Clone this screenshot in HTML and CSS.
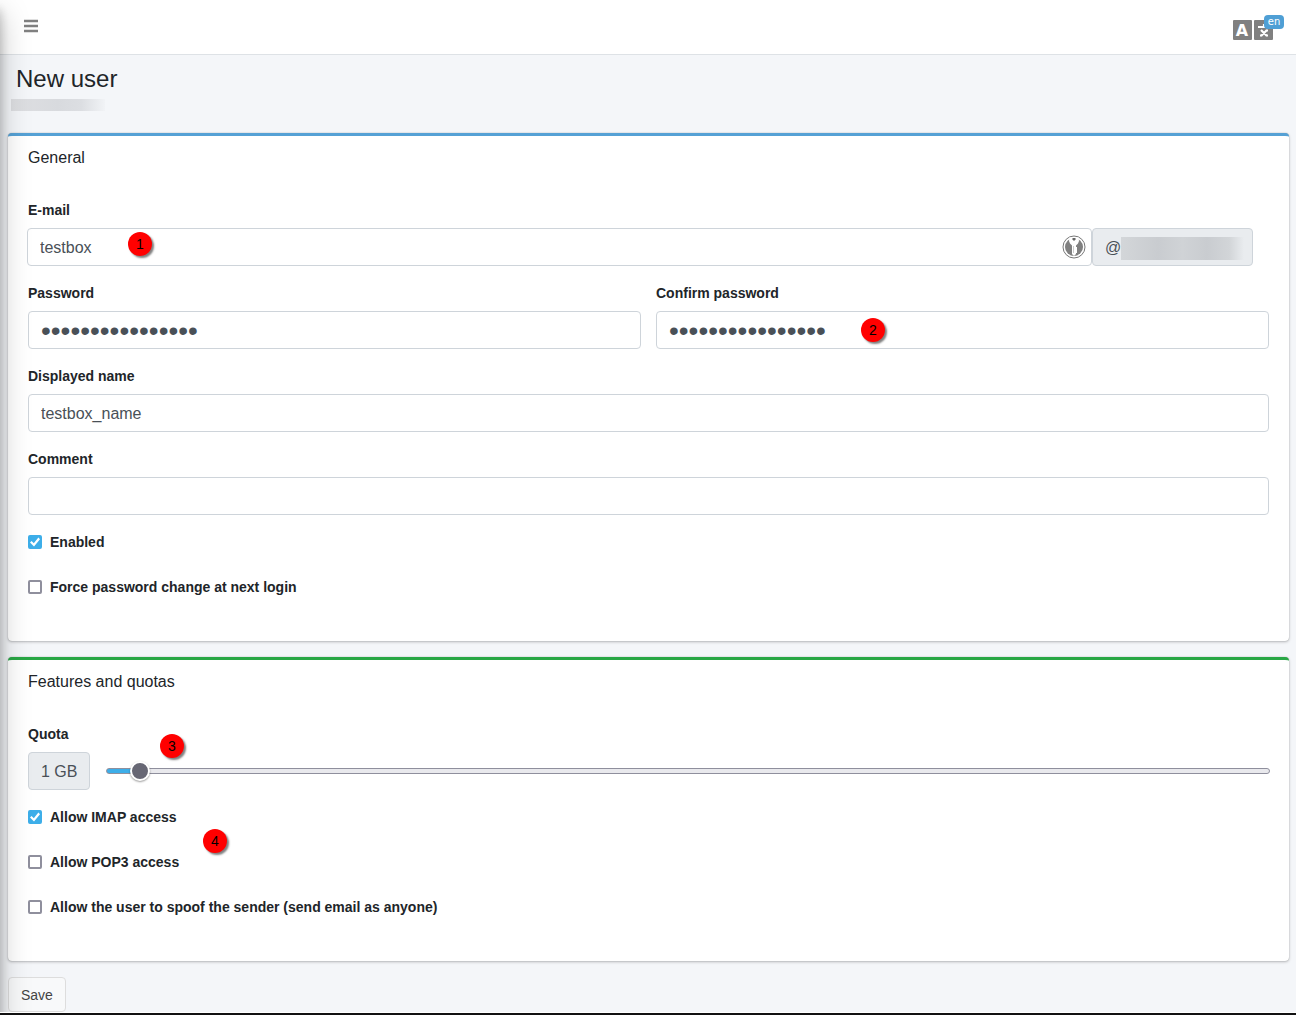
FILE: index.html
```html
<!DOCTYPE html>
<html lang="en">
<head>
<meta charset="utf-8">
<meta name="viewport" content="width=device-width, initial-scale=1">
<title>New user</title>
<link rel="stylesheet" href="styles.css">
</head>
<body>
<nav class="navbar">
  <button class="nav-button" type="button" aria-label="Toggle menu">
    <svg width="14" height="14" viewBox="0 0 14 14" aria-hidden="true"><path d="M0 .7h14v2.500H0zM0 5.700h14v2.500H0zM0 10.700h14v2.500H0z" fill="#808080"/></svg>
  </button>
  <button class="nav-button language" type="button" aria-label="Language">
    <svg width="40" height="20" viewBox="0 0 40 20" aria-hidden="true">
      <rect width="19" height="20" rx="1" fill="#808080"/>
      <rect x="21" width="19" height="20" rx="1" fill="#808080"/>
      <text class="language-letter" x="9" y="16" text-anchor="middle">A</text>
      <path d="M25 7H36M31 4V7M28 10L34 16M34 10L28 16M27 15.500H29.500M32.500 15.500H35M33 10.500H35" fill="none" stroke="#fff" stroke-width="2.200"/>
    </svg>
    <span class="badge">en</span>
  </button>
</nav>
<main>
  <header class="page-header">
    <h1>New user</h1>
    <div class="domain-mask"></div>
  </header>
  <form>
    <section class="card card-info">
      <h2>General</h2>
      <div class="card-body">
        <div class="field">
          <label for="email">E-mail</label>
          <div class="input-group email-group">
            <div class="email-box">
              <input class="control" id="email" type="text" value="testbox">
              <svg class="key" width="24" height="24" viewBox="0 0 24 24" aria-hidden="true">
                <circle cx="12" cy="12" r="11" fill="#fff" stroke="#777" stroke-width="1"/>
                <circle cx="12" cy="12" r="9" fill="#808080"/>
                <path d="M7.500 2.500H16.500L17 6L16 8.500L14 10.500V19L12 21L10 19V10.500L8 8.500L7 6Z" fill="#fff"/>
                <path d="M10.500 3H13.500V4.500L12 6L10.500 4.500Z" fill="#666"/>
                <path d="M11.500 11V18" fill="none" stroke="#ccc" stroke-width="1"/>
                <path d="M14 12L15 13L14 14L15 15L14 16L15 17L14 18" fill="#fff" stroke="#fff" stroke-width="1"/>
              </svg>
              <span class="marker marker-email">1</span>
            </div>
            <span class="addon domain">@<span class="addon-mask"></span></span>
          </div>
        </div>
        <div class="columns">
          <div class="field">
            <label for="password">Password</label>
            <input class="control" id="password" type="password" value="abcdefghijklmnop">
          </div>
          <div class="field">
            <label for="confirm">Confirm password</label>
            <input class="control" id="confirm" type="password" value="abcdefghijklmnop">
            <span class="marker marker-confirm">2</span>
          </div>
        </div>
        <div class="field">
          <label for="name">Displayed name</label>
          <input class="control" id="name" type="text" value="testbox_name">
        </div>
        <div class="field">
          <label for="comment">Comment</label>
          <input class="control" id="comment" type="text">
        </div>
        <div class="check"><input type="checkbox" id="enabled" checked><label for="enabled">Enabled</label></div>
        <div class="check"><input type="checkbox" id="force"><label for="force">Force password change at next login</label></div>
      </div>
    </section>
    <section class="card card-success">
      <h2>Features and quotas</h2>
      <div class="card-body">
        <div class="field">
          <label for="quota">Quota</label>
          <div class="input-group">
            <span class="addon">1 GB</span>
            <input class="slider" id="quota" type="range" min="0" max="50" value="1">
          </div>
          <span class="marker marker-quota">3</span>
        </div>
        <div class="check"><input type="checkbox" id="imap" checked><label for="imap">Allow IMAP access</label><span class="marker marker-access">4</span></div>
        <div class="check"><input type="checkbox" id="pop"><label for="pop">Allow POP3 access</label></div>
        <div class="check"><input type="checkbox" id="spoof"><label for="spoof">Allow the user to spoof the sender (send email as anyone)</label></div>
      </div>
    </section>
    <button class="save" type="submit">Save</button>
  </form>
</main>
<div class="bottom-line"></div>
</body>
</html>
```
FILE: styles.css
```css
*, *::before, *::after { box-sizing: border-box; }

body {
  margin: 0;
  overflow-x: hidden;
  background: #f4f6f9;
  color: #212529;
  font: 16px/24px "Liberation Sans", Arial, sans-serif;
}

/* Shadow cast by the collapsed sidebar */
body::before {
  content: "";
  position: fixed;
  z-index: 5;
  top: 0;
  bottom: -60px;
  left: -250px;
  width: 250px;
  box-shadow: 0 14px 28px rgba(0, 0, 0, .25), 0 10px 10px rgba(0, 0, 0, .22);
  pointer-events: none;
}

.navbar {
  display: flex;
  align-items: center;
  justify-content: space-between;
  height: 55px;
  padding: 0 23px 0 24px;
  background: #fff;
  border-bottom: 1px solid #dee2e6;
}

.nav-button {
  display: flex;
  padding: 0 0 2px;
  border: 0;
  background: none;
}

.language { position: relative; padding: 6px 0 0; }
.language-letter { fill: #fff; font: bold 16px "DejaVu Sans", sans-serif; }

.badge {
  position: absolute;
  top: 1px;
  right: -11px;
  width: 20px;
  height: 14px;
  border-radius: 4px;
  background: #4f9fd5;
  color: #fff;
  font: 10px/14px "DejaVu Sans", sans-serif;
  text-align: center;
}

main { padding: 0 7px 0 8px; }

.page-header { padding: 10px 8px 22px; }
h1 { margin: 0; font-size: 24px; font-weight: 400; line-height: 28px; }

.domain-mask {
  width: 94px;
  height: 12px;
  margin: 6px 0 0 -5px;
  background: linear-gradient(90deg, #dedfe2, #d8dade 50%, #dcdee2 75%, #f1f3f6);
}

.card {
  margin-bottom: 16px;
  border-top: 3px solid #55a1d5;
  border-radius: 4px;
  background: #fff;
  box-shadow: 0 0 1px rgba(0, 0, 0, .3), 0 1px 3px rgba(0, 0, 0, .25);
}

.card-success { border-top-color: #28a745; }
h2 { margin: 0; padding: 12px 20px; font-size: 16px; font-weight: 400; line-height: 19px; }
.card-body { padding: 20px; }
.field { position: relative; margin-bottom: 16px; }
label { display: block; font-size: 14px; font-weight: 700; line-height: 23px; }
.field > label { margin-bottom: 6px; }

.control {
  display: block;
  width: 100%;
  height: 38px;
  padding: 7px 12px 5px;
  border: 1px solid #ced4da;
  border-radius: 4px;
  background: transparent;
  color: #495057;
  font: inherit;
}

.control[type="password"] { font-size: 28px; }

.columns { display: grid; grid-template-columns: 1fr 1fr; gap: 15px; }
.input-group { display: flex; align-items: center; }
.email-group { margin: 0 16px 0 -1px; }
.email-box { position: relative; flex: 1; }
.key { position: absolute; top: 7px; right: 6px; }

.addon {
  display: flex;
  align-items: center;
  height: 38px;
  padding: 2px 12px 0;
  border: 1px solid #ced4da;
  border-radius: 4px;
  background: #e9ecef;
  color: #495057;
}

.domain { width: 161px; padding-right: 8px; }

.addon-mask {
  flex: 1;
  height: 23px;
  background: linear-gradient(90deg, #d3d6d9, #c9ccd0 30%, #d0d3d6 50%, #c9ccd0 70%, #d2d5d8 88%, #e9ecef);
}

.slider {
  flex: 1;
  height: 20px;
  margin: 0 -1px 0 16px;
  appearance: none;
  background: none;
}

.slider::-webkit-slider-runnable-track {
  height: 6px;
  border: 1px solid #8f8f9d;
  border-radius: 3px;
  background: linear-gradient(90deg, #3daee9 24px, #e9e9ed 24px);
}

.slider::-webkit-slider-thumb {
  width: 20px;
  height: 20px;
  margin-top: -8px;
  appearance: none;
  border: 2px solid #fff;
  border-radius: 50%;
  background: #676774;
  box-shadow: 0 1px 2px rgba(0, 0, 0, .4);
}

.check {
  position: relative;
  display: flex;
  align-items: flex-start;
  gap: 8px;
  margin-bottom: 22px;
}

.check input {
  width: 14px;
  height: 14px;
  margin: 4px 0 0;
  appearance: none;
  border: 2px solid #8f8f9d;
  border-radius: 2px;
  background: #fff;
}

.check input:checked {
  display: grid;
  place-items: center;
  border-color: #3daee9;
  background: #3daee9;
}

.check input:checked::before {
  content: "";
  width: 10px;
  height: 10px;
  background: #fff;
  clip-path: polygon(0 55%, 16% 40%, 38% 62%, 84% 6%, 100% 22%, 40% 94%);
}

.marker {
  position: absolute;
  width: 24px;
  height: 24px;
  border-radius: 50%;
  background: #f00;
  box-shadow: 2px 2px 2px rgba(0, 0, 0, .5);
  color: #000;
  font-size: 14px;
  line-height: 24px;
  text-align: center;
}

.marker-email { top: 4px; left: 101px; }
.marker-confirm { top: 36px; left: 205px; }
.marker-quota { top: 11px; left: 132px; }
.marker-access { top: 23px; left: 175px; }

.save {
  display: block;
  padding: 7px 12px 5px;
  border: 1px solid #ddd;
  border-radius: 4px;
  background: #f8f9fa;
  color: #444;
  font: 14px/21px "Liberation Sans", Arial, sans-serif;
}

.bottom-line {
  position: relative;
  z-index: 6;
  height: 3px;
  border-top: 1px solid #fff;
  background: #111;
}
```
